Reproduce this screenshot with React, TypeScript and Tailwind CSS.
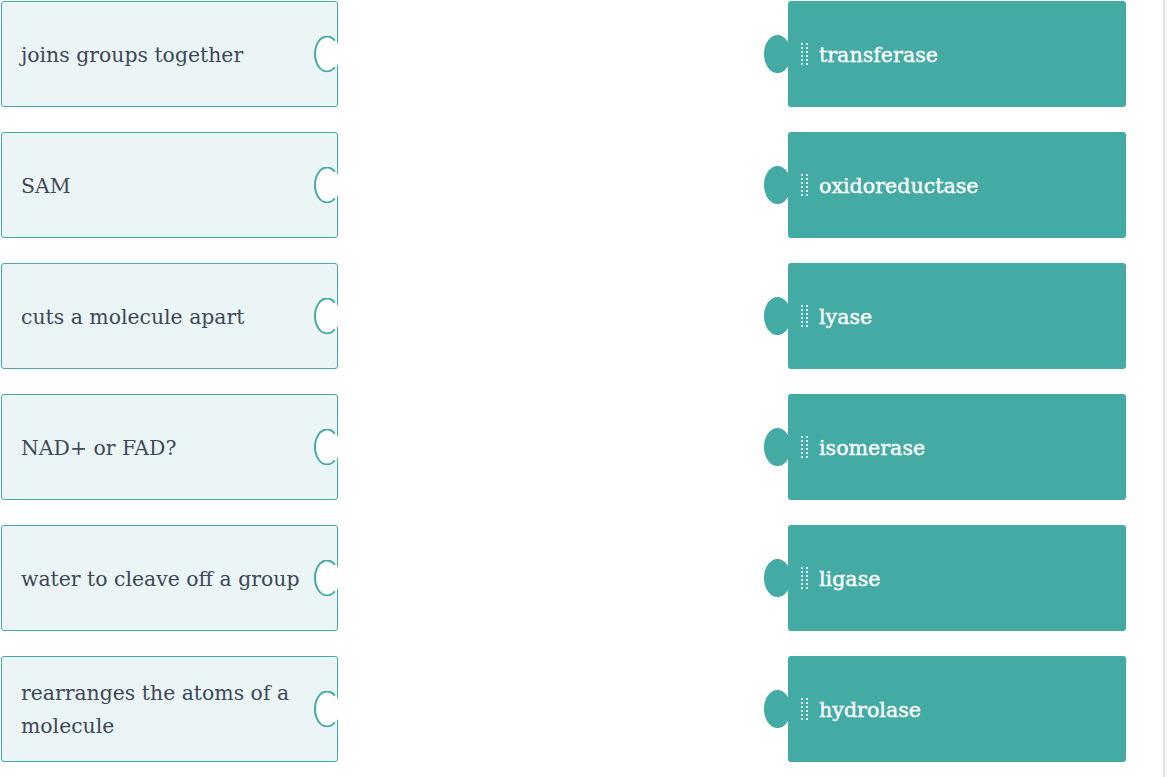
import React from 'react'

const pairs = [
  { prompt: 'joins groups together', answer: 'transferase' },
  { prompt: 'SAM', answer: 'oxidoreductase' },
  { prompt: 'cuts a molecule apart', answer: 'lyase' },
  { prompt: 'NAD+ or FAD?', answer: 'isomerase' },
  { prompt: 'water to cleave off a group', answer: 'ligase' },
  { prompt: 'rearranges the atoms of a molecule', answer: 'hydrolase' },
]

const Handle = () => (
  <svg width="8" height="22" viewBox="0 0 8 22" className="shrink-0">
    {[0, 4, 8, 12, 16, 20].map((y) => (
      <g key={y} fill="rgba(255,255,255,0.8)">
        <rect x="0" y={y} width="2" height="2" />
        <rect x="5" y={y} width="2" height="2" />
      </g>
    ))}
  </svg>
)

const App: React.FC = () => {
  return (
    <div className="flex h-screen w-full bg-white" style={{ fontFamily: '"DejaVu Serif", serif' }}>
      <div className="flex-1 pt-[1px] flex flex-col gap-[25px]">
        {pairs.map((p) => (
          <div key={p.answer} className="flex w-[1126px] items-stretch">
            <div className="relative ml-[1px] w-[337px] h-[106px] rounded-[3px] border border-[#43aaa4] bg-[#ebf5f6] flex items-center pl-[19px] pr-[36px]">
              <span className="text-[20.4px] leading-[33px] text-[#3d4858] translate-y-[1px]">{p.prompt}</span>
              <div className="absolute right-[-3px] top-1/2 -translate-y-1/2 w-[26px] h-[37px] rounded-[50%] bg-white border-2 border-[#43aaa4] border-r-transparent" />
            </div>
            <div className="relative ml-auto w-[338px] h-[106px] rounded-[3px] bg-[#43aaa4] flex items-center pl-[13px] gap-[10px]">
              <div className="absolute left-[-24px] top-1/2 -translate-y-1/2 w-[27px] h-[38px] rounded-[50%] bg-[#43aaa4]" />
              <Handle />
              <span className="text-[20.6px] text-white [-webkit-text-stroke:0.4px_white] translate-y-[1px]">{p.answer}</span>
            </div>
          </div>
        ))}
      </div>
      <div className="w-[2px] bg-[#e2e2e2]" />
      <div className="w-[2px] bg-[#f7f7f7]" />
    </div>
  )
}

export default App
